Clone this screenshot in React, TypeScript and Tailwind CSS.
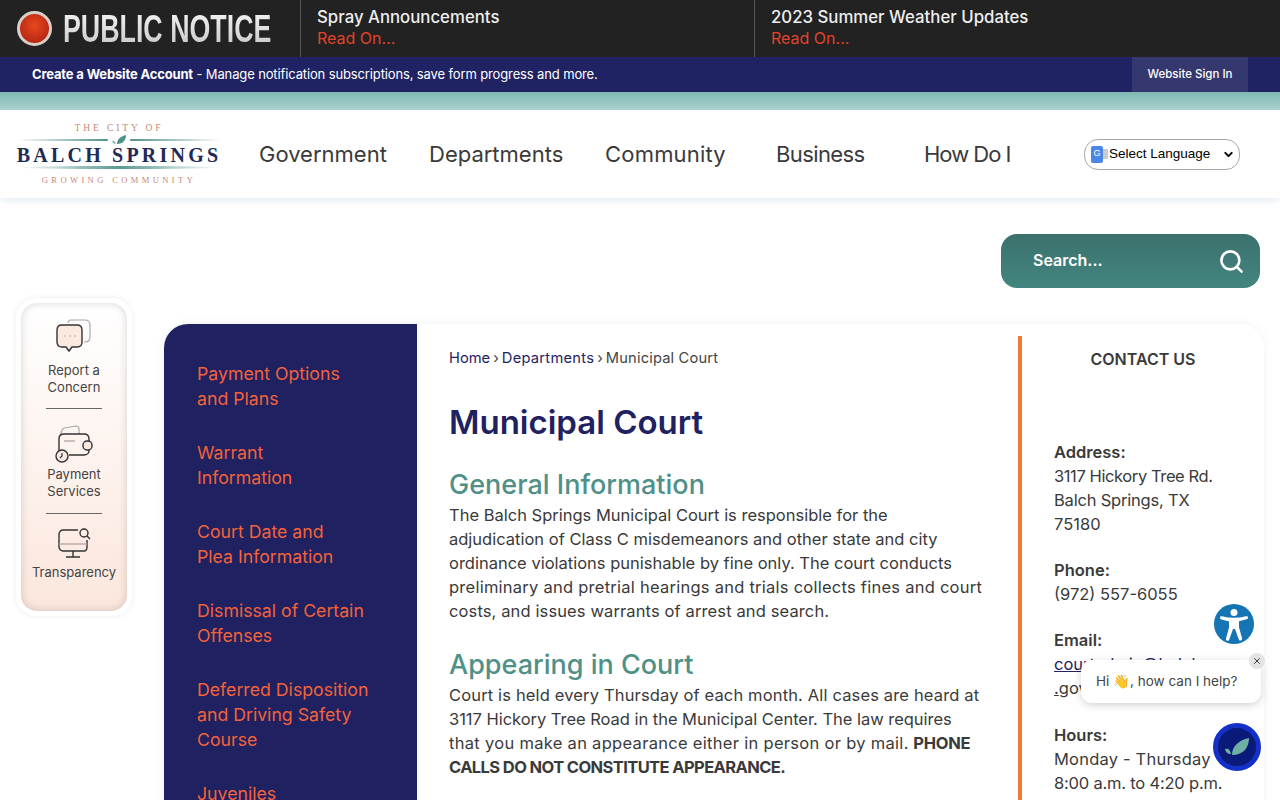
import React from 'react';
import { ChevronDown, Search, X } from 'lucide-react';

const font = "font-['Inter','Liberation_Sans',sans-serif]";

const sideLinks = [
  ['Payment Options', 'and Plans'],
  ['Warrant', 'Information'],
  ['Court Date and', 'Plea Information'],
  ['Dismissal of Certain', 'Offenses'],
  ['Deferred Disposition', 'and Driving Safety', 'Course'],
  ['Juveniles'],
];

const navItems = [
  { label: 'Government', cls: 'w-[170px]' },
  { label: 'Departments', cls: 'w-[176px]' },
  { label: 'Community', cls: 'w-[171px] tracking-[0.2px]' },
  { label: 'Business', cls: 'w-[148px] tracking-[-0.6px]' },
  { label: 'How Do I', cls: 'w-[120px] tracking-[-1px]' },
];

const ReportIcon = () => (
  <svg width="38" height="38" viewBox="0 0 38 38" fill="none">
    <path d="M13 5c0-2 1.500-3 3-3h14c3 0 5 2 5 5v12c0 3-2 5-5 5h-1" stroke="#a8a8a8" strokeWidth="1.200" />
    <path d="M7 7h15c3 0 5 2 5 5v12c0 3-2 5-5 5h-5l-3 4-3-4H7c-3 0-5-2-5-5V12c0-3 2-5 5-5z" fill="#fbe9df" stroke="#333" strokeWidth="1.400" />
    <circle cx="10" cy="18" r=".8" fill="#c9a79a" />
    <circle cx="15" cy="18" r=".8" fill="#c9a79a" />
    <circle cx="20" cy="18" r=".8" fill="#c9a79a" />
  </svg>
);

const WalletIcon = () => (
  <svg width="40" height="38" viewBox="0 0 40 38" fill="none">
    <path d="M6 11l2-6c.5-1 1-1.500 2-2l12-2c2 0 3 1 3 3v5" stroke="#a8a8a8" strokeWidth="1.200" />
    <path d="M5 26V14c0-3 2-5 5-5h20c3 0 5 2 5 5v2M35 25v1c0 2-2 4-5 4H15" stroke="#333" strokeWidth="1.400" />
    <path d="M10 16h11" stroke="#b8a8a0" strokeWidth="1.400" />
    <rect x="29" y="16" width="9" height="9" rx="4" stroke="#333" strokeWidth="1.400" fill="#fbe9df" />
    <circle cx="8" cy="31" r="6" stroke="#333" strokeWidth="1.400" fill="#fbe9df" />
    <path d="M8 28v3l-2 2" stroke="#333" strokeWidth="1.200" />
  </svg>
);

const ScreenIcon = () => (
  <svg width="36" height="32" viewBox="0 0 36 32" fill="none">
    <path d="M22 3H7c-2 0-4 2-4 4v13c0 2 2 4 4 4h21c2 0 3-2 3-4v-7" stroke="#333" strokeWidth="1.400" />
    <path d="M3 17h28" stroke="#b8a8a0" strokeWidth="1.400" />
    <path d="M17 24v6M10 30h14" stroke="#333" strokeWidth="1.400" />
    <circle cx="28" cy="6" r="4" stroke="#333" strokeWidth="1.400" />
    <path d="M31 9l3 3" stroke="#333" strokeWidth="1.400" />
  </svg>
);

const Logo = () => (
  <div className="w-[204px] flex flex-col items-center font-['Liberation_Serif',serif]">
    <div className="text-[9.500px] leading-[12px] tracking-[2.900px] text-[#c8897a]">THE CITY OF</div>
    <div className="flex items-center w-full gap-[4px] h-[9px] mt-[1px]">
      <div className="flex-1 h-[2px] rounded-full bg-[linear-gradient(90deg,transparent,#4f9088)]" />
      <svg width="14" height="10" viewBox="0 0 14 10">
        <path d="M5 9C5 4 9 1 14 0c0 5-3 9-9 9z" fill="#4f9088" />
        <path d="M0 6c2-1 3 0 4 3-2 0-3-1-4-3z" fill="#7fb3ac" />
      </svg>
      <div className="flex-1 h-[2px] rounded-full bg-[linear-gradient(90deg,#4f9088,transparent)]" />
    </div>
    <div className="text-[20px] leading-[22px] tracking-[3.200px] font-bold text-[#1f2a55] whitespace-nowrap">BALCH SPRINGS</div>
    <div className="w-full h-[3px] rounded-[50%] bg-[linear-gradient(90deg,transparent,#5a9a92,transparent)]" />
    <div className="text-[8.500px] leading-[12px] tracking-[3.400px] text-[#c8897a] mt-[5px]">GROWING COMMUNITY</div>
  </div>
);

export default function App() {
  return (
    <div className={`relative h-[800px] overflow-hidden bg-white text-[#333] ${font}`}>
      {/* alert bar */}
      <div className="flex h-[57px] bg-[#222]">
        <div className="w-[301px] flex items-center border-r border-[#555] pl-[17px] shrink-0">
          <div className="w-[35px] h-[35px] shrink-0 rounded-full border-[3px] border-[#d8d0c8] bg-[radial-gradient(circle_at_50%_40%,#e8481c,#a81c10)]" />
          <div className="ml-[11px] shrink-0 origin-left scale-x-[0.705] font-['Liberation_Sans',sans-serif] font-bold text-[38px] leading-none bg-[linear-gradient(180deg,#f4f4f4,#c8c8c8)] bg-clip-text text-transparent whitespace-nowrap">PUBLIC NOTICE</div>
        </div>
        <div className="w-[454px] border-r border-[#555] pl-[16px] pt-[7px] shrink-0">
          <div className="text-[16.800px] leading-[20px] font-medium text-[#eee]">Spray Announcements</div>
          <div className="text-[16px] leading-[22px] text-[#e0432a]">Read On...</div>
        </div>
        <div className="pl-[16px] pt-[7px]">
          <div className="text-[16.800px] leading-[20px] font-medium text-[#eee]">2023 Summer Weather Updates</div>
          <div className="text-[16px] leading-[22px] text-[#e0432a]">Read On...</div>
        </div>
      </div>

      {/* account bar */}
      <div className="flex h-[35px] items-stretch justify-between bg-[#1f2363] pl-[32px] pr-[32px]">
        <div className="flex items-center pt-[1px] text-[13px] text-white">
          <span className="font-bold tracking-[-0.16px]">Create a Website Account</span>
          <span className="tracking-[-0.13px]">&nbsp;- Manage notification subscriptions, save form progress and more.</span>
        </div>
        <div className="w-[116px] flex items-center justify-center pt-[1px] bg-[#34386f] text-[11.500px] font-medium text-white">Website Sign In</div>
      </div>

      <div className="h-[18px] bg-[linear-gradient(180deg,#7fb8b2,#a9d3cf)]" />

      {/* header */}
      <div className="flex h-[88px] items-center shadow-[0_2px_8px_rgba(190,210,225,0.45)] pl-[17px]">
        <Logo />
        <div className="flex ml-[38px]">
          {navItems.map((n) => (
            <div key={n.label} className={`${n.cls} text-[22px] font-normal text-[#3a3a3a] whitespace-nowrap`}>{n.label}</div>
          ))}
        </div>
        <div className="ml-[40px] w-[156px] h-[31px] flex items-center rounded-[14px] border border-[#a8a8a8] pl-[6px] pr-[4px] font-['Liberation_Sans',sans-serif] text-[13.500px] text-black">
          <div className="w-[12px] h-[17px] bg-[#4a86e8] text-white text-[9px] leading-[15px] text-center rounded-[2px]">G</div>
          <div className="w-[5px] h-[10px] bg-[#ccc] mr-[1px]" />
          <span className="whitespace-nowrap">Select Language</span>
          <ChevronDown size={13} strokeWidth={3.500} className="ml-auto" />
        </div>
      </div>

      {/* search */}
      <div className="flex justify-end pr-[20px] pt-[36px]">
        <div className="w-[259px] h-[54px] flex items-center justify-between rounded-[16px] bg-[linear-gradient(180deg,#3b716d,#438580)] pl-[32px] pr-[15px] text-white">
          <span className="text-[16px] font-semibold pb-[2px]">Search...</span>
          <Search size={27} strokeWidth={2.300} />
        </div>
      </div>

      {/* body */}
      <div className="flex items-start pl-[16px] pt-[10px]">
        <div className="w-[116px] h-[318px] shrink-0 rounded-[20px] bg-white p-[5px] shadow-[0_0_6px_rgba(0,0,0,0.08)]">
          <div className="h-full rounded-[16px] bg-[linear-gradient(180deg,#fff_0%,#fdf3ee_50%,#fbe6dc_100%)] shadow-[inset_0_0_8px_rgba(0,0,0,0.16)] flex flex-col items-center pt-[15px] text-[13px] leading-[17px] text-[#444] text-center">
            <ReportIcon />
            <div className="mt-[6px]">Report a<br />Concern</div>
            <div className="w-[56px] h-px bg-[#666] mt-[12px] mb-[16px]" />
            <WalletIcon />
            <div className="mt-[3px]">Payment<br />Services</div>
            <div className="w-[56px] h-px bg-[#666] mt-[13px] mb-[13px]" />
            <ScreenIcon />
            <div className="mt-[5px] whitespace-nowrap">Transparency</div>
          </div>
        </div>

        <div className="ml-[32px] w-[1100px] mt-[26px] h-[500px] flex rounded-tl-[24px] rounded-tr-[24px] bg-white shadow-[0_0_8px_rgba(200,215,225,0.35)] overflow-hidden">
          <div className="w-[253px] shrink-0 bg-[#1f2160] pl-[33px] pt-[37px] text-[17.700px] leading-[25px] text-[#f4623a]">
            {sideLinks.map((l) => (
              <div key={l[0]} className="mb-[29px]">
                {l.map((t) => <div key={t} className="whitespace-nowrap">{t}</div>)}
              </div>
            ))}
          </div>

          <div className="w-[601px] shrink-0 pl-[32px] pt-[24px]">
            <div className="flex text-[14.700px] leading-[20px] text-[#444]">
              <span className="text-[#1f2363]">Home</span>
              <span className="mx-[3px]">›</span>
              <span className="text-[#1f2363] tracking-[0.25px]">Departments</span>
              <span className="mx-[3px]">›</span>
              <span className="tracking-[0.15px]">Municipal Court</span>
            </div>
            <h1 className="mt-[34px] text-[33px] leading-[40px] font-semibold text-[#1f2160]">Municipal Court</h1>
            <h2 className="mt-[26px] pb-[2px] text-[27px] leading-[33px] font-medium text-[#4f9088]">General Information</h2>
            <div className="text-[16.500px] leading-[24px] text-[#3a3a3a] whitespace-nowrap">
              <p>The Balch Springs Municipal Court is responsible for the</p>
              <p>adjudication of Class C misdemeanors and other state and city</p>
              <p>ordinance violations punishable by fine only. The court conducts</p>
              <p className="tracking-[0.25px]">preliminary and pretrial hearings and trials collects fines and court</p>
              <p className="tracking-[0.12px]">costs, and issues warrants of arrest and search.</p>
            </div>
            <h2 className="mt-[25px] pb-[2px] text-[27px] leading-[33px] font-medium text-[#4f9088]">Appearing in Court</h2>
            <div className="text-[16.500px] leading-[24px] text-[#3a3a3a] whitespace-nowrap">
              <p className="tracking-[0.15px]">Court is held every Thursday of each month. All cases are heard at</p>
              <p className="tracking-[-0.03px]">3117 Hickory Tree Road in the Municipal Center. The law requires</p>
              <p><span className="tracking-[0.3px]">that you make an appearance either in person or by mail.</span> <b className="tracking-[-0.3px]">PHONE</b></p>
              <p className="font-bold tracking-[-0.6px]">CALLS DO NOT CONSTITUTE APPEARANCE.</p>
            </div>
          </div>

          <div className="mt-[12px] border-l-[4px] border-[#f47a32] pl-[32px] text-[16.500px] leading-[24px] text-[#3a3a3a] whitespace-nowrap">
            <div className="w-[177px] pl-[1px] pt-[11px] text-center font-semibold text-[16px]">CONTACT US</div>
            <div className="mt-[69px] font-semibold">Address:</div>
            <div className="tracking-[-0.4px]">3117 Hickory Tree Rd.</div>
            <div className="tracking-[-0.2px]">Balch Springs, TX</div>
            <div>75180</div>
            <div className="mt-[22px] font-semibold">Phone:</div>
            <div>(972) 557-6055</div>
            <div className="mt-[22px] font-semibold">Email:</div>
            <div><u className="text-[#1f2363]">courtadmin@balch</u></div>
            <div><u>.</u>gov</div>
            <div className="mt-[23px] font-semibold">Hours:</div>
            <div className="tracking-[0.2px]">Monday - Thursday</div>
            <div className="tracking-[-0.2px]">8:00 a.m. to 4:20 p.m.</div>
          </div>
        </div>
      </div>

      {/* floating widgets */}
      <div className="absolute left-[1214px] top-[604px] w-[40px] h-[40px] rounded-full bg-[#1474b4]">
        <svg viewBox="0 0 40 40" width="40" height="40" fill="#fff">
          <circle cx="20" cy="8.500" r="3.500" />
          <path d="M6 13.500c0-1 1-1.500 2-1.300 8 2 16 2 24 0 1-.2 2 .3 2 1.300 0 1-.6 1.500-1.500 1.800l-7.500 2v6l3 11c.3 1-.2 2-1.200 2.200-1 .3-1.800-.3-2.100-1.200L21 25h-2l-3.700 10.500c-.3.900-1.100 1.500-2.100 1.200-1-.2-1.500-1.200-1.200-2.200l3-11v-6l-7.500-2C6.600 15 6 14.500 6 13.500z" />
        </svg>
      </div>
      <div className="absolute left-[1081px] top-[660px] w-[180px] h-[43px] flex items-center rounded-[11px] bg-white pl-[15px] text-[13.500px] text-[#444] shadow-[0_2px_8px_rgba(0,0,0,0.18)] whitespace-nowrap">
        Hi 👋, how can I help?
      </div>
      <div className="absolute left-[1249px] top-[653px] w-[16px] h-[16px] flex items-center justify-center rounded-full bg-[#e4e4e4] text-[#222]">
        <X size={10} strokeWidth={2} />
      </div>
      <div className="absolute left-[1213px] top-[723px] w-[48px] h-[48px] flex items-center justify-center rounded-full border-[5px] border-[#1430c8] bg-[#0a1a78]">
        <svg width="26" height="20" viewBox="0 0 26 20">
          <path d="M8 18C8 9 15 3 25 1c0 9-5 17-17 17z" fill="#6fb0a4" />
          <path d="M1 12c3-1 5 0 6 5-3 0-5-1-6-5z" fill="#6fb0a4" />
        </svg>
      </div>
    </div>
  );
}
